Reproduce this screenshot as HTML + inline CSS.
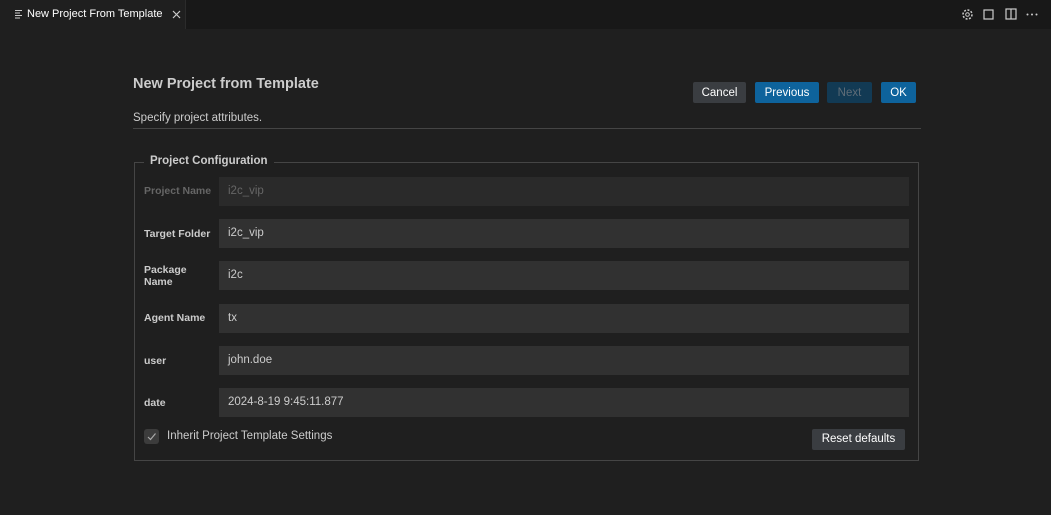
<!DOCTYPE html>
<html><head><style>
*{margin:0;padding:0;box-sizing:border-box}
body{width:1051px;height:515px;background:#1f1f1f;font-family:"Liberation Sans",sans-serif;color:#ccc;position:relative;overflow:hidden;font-size:12px}
.tabbar{position:absolute;left:0;top:0;width:1051px;height:29px;background:#181818}
.tab{position:absolute;left:0;top:0;width:186px;height:29px;background:#1f1f1f;border-right:1px solid #2b2b2b;color:#fff}
.a{position:absolute}
.btn{position:absolute;top:82px;height:21px;border-radius:2px;color:#fff;font-size:11.5px;text-align:center;line-height:22px}
.lbl{position:absolute;left:144px;font-weight:bold;font-size:10.5px;color:#ccc;line-height:12px}
.inp{position:absolute;left:219px;width:690px;height:29px;background:#313131;color:#ccc;font-size:11.5px;line-height:29px;padding-left:9px}
</style></head><body>
<div class="tabbar"></div>
<div class="tab">
<svg class="a" style="left:14px;top:9px" width="9" height="10"><path d="M1 1.5h7M1 4h5M1 6.5h7M1 9h5" stroke="#ccc" stroke-width="1"/></svg>
<span class="a" style="left:27px;top:8px;font-size:11px">New Project From Template</span>
<svg class="a" style="left:172px;top:10px" width="9" height="9"><path d="M1 1l7 7M8 1l-7 7" stroke="#ccc" stroke-width="1.2"/></svg>
</div>
<svg class="a" style="left:961px;top:8px" width="13" height="13"><circle cx="6.5" cy="6.5" r="4.5" fill="none" stroke="#ccc" stroke-width="1.5" stroke-dasharray="2 1.5"/><circle cx="6.5" cy="6.5" r="1.8" fill="none" stroke="#ccc"/></svg>
<svg class="a" style="left:983px;top:9px" width="11" height="11"><rect x="1" y="1" width="9" height="9" fill="none" stroke="#ccc" stroke-width="1.2"/></svg>
<svg class="a" style="left:1005px;top:8px" width="12" height="12"><rect x="1" y="1" width="10" height="10" fill="none" stroke="#ccc" stroke-width="1.2"/><path d="M6 1v10" stroke="#ccc" stroke-width="1.2"/></svg>
<svg class="a" style="left:1026px;top:13px" width="12" height="3"><circle cx="1.5" cy="1.5" r="1" fill="#ccc"/><circle cx="6" cy="1.5" r="1" fill="#ccc"/><circle cx="10.5" cy="1.5" r="1" fill="#ccc"/></svg>

<div class="a" style="left:133px;top:76px;font-size:14.5px;font-weight:bold;color:#ccc">New Project from Template</div>
<div class="a" style="left:133px;top:112px;font-size:11.5px;color:#ccc">Specify project attributes.</div>
<div class="a" style="left:133px;top:128px;width:788px;height:1px;background:#454545"></div>
<div class="btn" style="left:693px;width:53px;background:#3a3d41">Cancel</div>
<div class="btn" style="left:755px;width:64px;background:#0e639c">Previous</div>
<div class="btn" style="left:827px;width:45px;background:#123a54;color:#5f6c77">Next</div>
<div class="btn" style="left:881px;width:35px;background:#0e639c">OK</div>

<div class="a" style="left:134px;top:162px;width:785px;height:299px;border:1px solid #454545"></div>
<div class="a" style="left:144px;top:155px;padding:0 6px;background:#1f1f1f;font-weight:bold;font-size:11.5px;color:#ccc">Project Configuration</div>

<div class="lbl" style="top:185px;color:#666">Project Name</div><div class="inp" style="top:177px;background:#2a2a2a;color:#666">i2c_vip</div>
<div class="lbl" style="top:228px">Target Folder</div><div class="inp" style="top:219px">i2c_vip</div>
<div class="lbl" style="top:264px">Package<br>Name</div><div class="inp" style="top:261px">i2c</div>
<div class="lbl" style="top:312px">Agent Name</div><div class="inp" style="top:304px">tx</div>
<div class="lbl" style="top:355px">user</div><div class="inp" style="top:346px">john.doe</div>
<div class="lbl" style="top:397px">date</div><div class="inp" style="top:388px">2024-8-19 9:45:11.877</div>

<div class="a" style="left:144px;top:429px;width:15px;height:15px;background:#3c3c3c;border-radius:3px"></div>
<svg class="a" style="left:145px;top:430px" width="13" height="13"><path d="M3 7l2.5 2.5L10.5 3.5" fill="none" stroke="#aaa" stroke-width="1.2"/></svg>
<div class="a" style="left:167px;top:430px;font-size:11.5px;color:#ccc">Inherit Project Template Settings</div>
<div class="a" style="left:812px;top:429px;width:93px;height:21px;background:#3a3d41;border-radius:2px;color:#fff;text-align:center;line-height:21px;font-size:11.5px">Reset defaults</div>
</body></html>
